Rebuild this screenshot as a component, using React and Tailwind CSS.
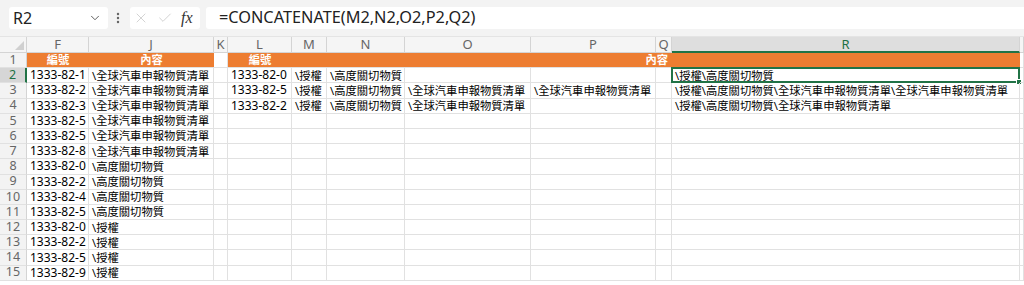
import React from 'react';
import { ChevronDown, EllipsisVertical, X, Check } from 'lucide-react';

const COLS = 'grid grid-cols-[27px_62px_125px_14px_64px_35px_78px_126px_125px_16px_348px_4px]';
const LETTERS = ['F', 'J', 'K', 'L', 'M', 'N', 'O', 'P', 'Q', 'R', ''];

const GQ = '\\全球汽車申報物質清單';
const HD = '\\高度關切物質';
const SQ = '\\授權';

const left = [
  ['1333-82-1', GQ], ['1333-82-2', GQ], ['1333-82-3', GQ], ['1333-82-5', GQ],
  ['1333-82-5', GQ], ['1333-82-8', GQ], ['1333-82-0', HD], ['1333-82-2', HD],
  ['1333-82-4', HD], ['1333-82-5', HD], ['1333-82-0', SQ], ['1333-82-2', SQ],
  ['1333-82-5', SQ], ['1333-82-9', SQ],
];

// L, M, N, O, P, Q, R
const right = [
  ['1333-82-0', SQ, HD, '', '', '', SQ + HD],
  ['1333-82-5', SQ, HD, GQ, GQ, '', SQ + HD + GQ + GQ],
  ['1333-82-2', SQ, HD, GQ, '', '', SQ + HD + GQ],
];

const Cell = ({ children, cjk, className = '' }) => (
  <div
    className={`relative h-[15.2px] flex items-center border-r border-b border-[#e1e1e1] pl-[3px] whitespace-nowrap leading-none text-black ${
      cjk ? 'text-[11.3px]' : 'text-[12px]'
    } ${className}`}
  >
    {children}
  </div>
);

const RowHead = ({ n, active }) => (
  <div
    className={`h-[15.2px] flex items-center justify-center text-[12.5px] leading-none border-b border-[#e1e1e1] ${
      active
        ? 'bg-[#d6d6d6] text-[#1d7044] border-r-2 border-r-[#217346]'
        : 'bg-[#f3f3f3] text-[#666] border-r border-r-[#d4d4d4]'
    }`}
  >
    {n}
  </div>
);

export default function App() {
  return (
    <div className="w-[1024px] h-[285px] overflow-hidden bg-white font-['Noto_Sans','Noto_Sans_CJK_TC',sans-serif]">
      {/* 수식 입력줄 */}
      <div className="h-[37px] bg-[#f3f3f3] flex items-center pl-[9px] pb-[1px] border-b border-[#e4e4e4]">
        <div className="w-[99px] h-[22px] bg-white rounded-[3px] flex items-center justify-between pl-[4px] pr-[6px]">
          <span className="text-[16px] text-[#222] leading-none">R2</span>
          <ChevronDown size={14} strokeWidth={1.6} className="text-[#555]" />
        </div>
        <EllipsisVertical size={14} strokeWidth={2.2} className="text-[#666] ml-[3px]" />
        <div className="ml-[5px] w-[70px] h-[22px] bg-white rounded-[3px] flex items-center pl-[3px] gap-[8px]">
          <X size={16} strokeWidth={1.1} className="text-[#c2c2c2]" />
          <Check size={16} strokeWidth={1.1} className="text-[#c2c2c2]" />
          <span className="font-['Liberation_Serif',serif] italic text-[16px] text-[#333] leading-none">fx</span>
        </div>
        <div className="ml-[6px] flex-1 h-[22px] bg-white rounded-l-[3px] flex items-center pl-[13px]">
          <span className="text-[16.3px] text-[#222] leading-none">=CONCATENATE(M2,N2,O2,P2,Q2)</span>
        </div>
      </div>

      {/* 열 머리글 */}
      <div className={`${COLS} h-[16px] bg-[#f5f5f5]`}>
        <div className="relative border-r border-b border-[#d4d4d4]">
          <svg width="9" height="9" className="absolute right-[2px] bottom-[2px]">
            <polygon points="9,0 9,9 0,9" fill="#d0d0d0" />
          </svg>
        </div>
        {LETTERS.map((l, i) =>
          l === 'R' ? (
            <div
              key={i}
              className="flex items-center justify-center text-[13px] leading-none text-[#1d7044] bg-[#dedede] border-b-2 border-[#217346] border-r border-r-[#d4d4d4]"
            >
              {l}
            </div>
          ) : (
            <div
              key={i}
              className="flex items-center justify-center text-[13px] leading-none text-[#666] border-r border-b border-[#d4d4d4]"
            >
              {l}
            </div>
          )
        )}
      </div>

      {/* 1행 */}
      <div className={COLS}>
        <RowHead n={1} />
        <div className="h-[15.2px] bg-[#ed7d31] text-white text-[11.3px] leading-none font-bold flex items-center justify-center border-b border-[#e1e1e1]">
          編號
        </div>
        <div className="h-[15.2px] bg-[#ed7d31] text-white text-[11.3px] leading-none font-bold flex items-center justify-center border-b border-[#e1e1e1]">
          內容
        </div>
        <Cell />
        <div className="col-span-7 h-[15.2px] bg-[#ed7d31] text-white text-[11.3px] leading-none font-bold flex items-center border-b border-[#e1e1e1]">
          <div className="w-[444px] flex justify-between">
            <span className="w-[64px] text-center">編號</span>
            <span className="pr-[4px]">內容</span>
          </div>
        </div>
        <Cell />
      </div>

      {/* 데이터 행 */}
      {left.map(([num, text], i) => {
        const r = right[i] || ['', '', '', '', '', '', ''];
        return (
          <div key={i} className={COLS}>
            <RowHead n={i + 2} active={i === 0} />
            <Cell>{num}</Cell>
            <Cell cjk>{text}</Cell>
            <Cell />
            <Cell>{r[0]}</Cell>
            <Cell cjk>{r[1]}</Cell>
            <Cell cjk>{r[2]}</Cell>
            <Cell cjk>{r[3]}</Cell>
            <Cell cjk>{r[4]}</Cell>
            <Cell cjk>{r[5]}</Cell>
            <Cell cjk>
              {r[6]}
              {i === 0 && (
                <div className="absolute -left-px -top-px -right-px -bottom-px border-2 border-[#217346]">
                  <div className="absolute -right-[4px] -bottom-[4px] w-[6px] h-[6px] bg-[#217346] border border-white" />
                </div>
              )}
            </Cell>
            <Cell />
          </div>
        );
      })}
    </div>
  );
}
